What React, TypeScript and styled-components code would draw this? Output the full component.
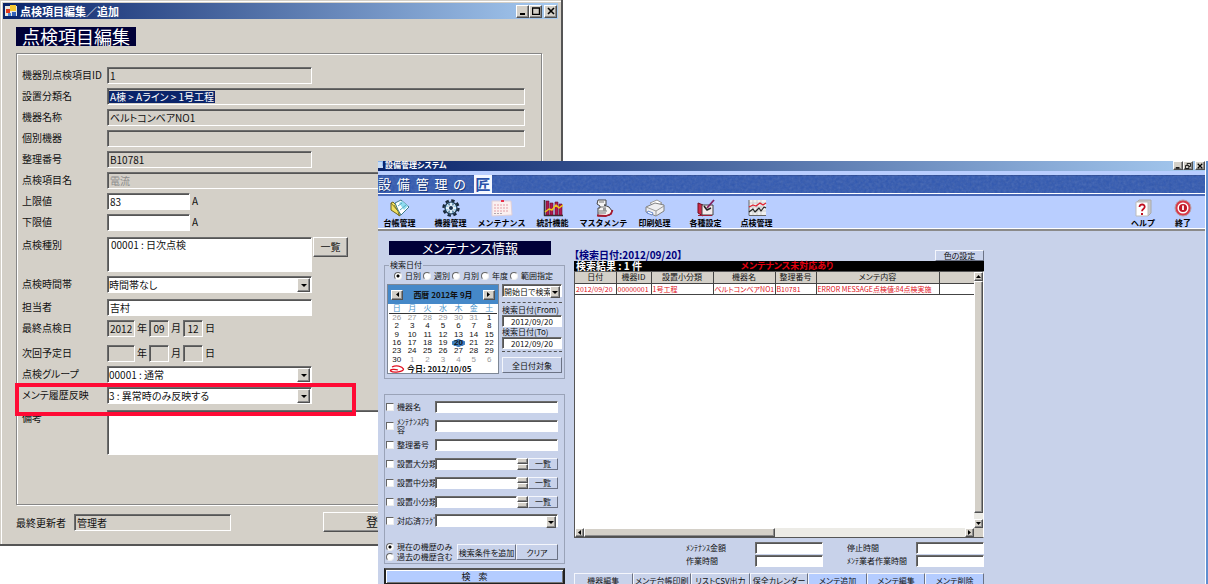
import React from "react";
import styled, { createGlobalStyle, css } from "styled-components";

const Global = createGlobalStyle`
  *, *::before, *::after { box-sizing: border-box; }
  body { margin: 0; background: #fff; }
  body, button, input, select, textarea {
    font-family: "Noto Sans CJK JP", "Liberation Sans", sans-serif;
    font-feature-settings: "palt";
    color: #111;
  }
  button, input, select, textarea { margin: 0; padding: 0; font-size: inherit; border-radius: 0; }
`;

const Desktop = styled.div`
  position: relative;
  height: 100vh;
  overflow: hidden;
  white-space: nowrap;
`;

const sunken = css`
  border: 1px solid;
  border-color: #6c6c6c #fff #fff #6c6c6c;
  box-shadow: inset 1px 1px 0 #555;
`;
const raised = css`
  border: 1px solid;
  border-color: #fff #505050 #505050 #fff;
  box-shadow: inset -1px -1px 0 #8c8c8c;
`;

/* ---------- shared title bar ---------- */
const WinButtons = styled.div<{ $w: number }>`
  display: flex;
  margin-left: auto;
  button {
    ${raised}
    display: grid;
    place-items: center;
    width: ${(p) => p.$w}px;
    height: 100%;
    background: #d4d0c8;
  }
  button:last-child { margin-left: 2px; }
  svg { display: block; }
`;

const MinIcon = () => (
  <svg width="8" height="7" viewBox="0 0 8 7"><path d="M1 6h5" stroke="#000" strokeWidth="2" /></svg>
);
const MaxIcon = () => (
  <svg width="8" height="8" viewBox="0 0 8 8"><path d="M.5 1h7v6.500h-7zM0 1h8" fill="none" stroke="#000" strokeWidth="1.400" /></svg>
);
const RestoreIcon = () => (
  <svg width="7" height="7" viewBox="0 0 7 7"><path d="M2.500 2.500v-2h4v3.500h-2M.5 3h4v3.500h-4z" fill="none" stroke="#000" /></svg>
);
const CloseIcon = () => (
  <svg width="8" height="8" viewBox="0 0 8 8"><path d="M1 1l6 6M7 1l-6 6" stroke="#000" strokeWidth="1.600" /></svg>
);

/* ---------- edit dialog ---------- */
const EditWindow = styled.section`
  position: absolute;
  left: 0;
  top: 0;
  width: fit-content;
  padding: 3px;
  background: #d4d0c8;
  border-right: 2px solid #555;
  border-bottom: 2px solid #555;
  box-shadow: inset 1px 1px 0 #d4d0c8, inset 2px 2px 0 #fff;
  font-size: 10px;
`;
const EditTitle = styled.header`
  display: flex;
  align-items: center;
  gap: 3px;
  height: 16px;
  padding: 1px 1px 1px 2px;
  background: linear-gradient(90deg, #0a246a, #a6caf0);
  color: #fff;
  font-size: 11px;
  font-weight: bold;
  line-height: 14px;
  ${WinButtons} { height: 13px; }
`;
const EditBody = styled.div`
  padding: 8px 16px 9px 13px;
`;
const Heading = styled.h1`
  width: fit-content;
  height: 19px;
  margin: 0;
  padding: 0 6px;
  background: #000038;
  color: #fff;
  font-size: 18px;
  font-weight: normal;
  line-height: 19px;
`;
const Panel = styled.div`
  margin-top: 7px;
  padding: 13px 16px 49px 5px;
  border: 1px solid #868686;
  box-shadow: inset 1px 1px 0 #fff, 1px 1px 0 #fff;
`;
const Row = styled.div<{ $gap?: number }>`
  position: relative;
  display: flex;
  align-items: flex-start;
  margin-top: ${(p) => p.$gap ?? 4}px;
  line-height: 16px;
  &:first-child { margin-top: 0; }
  > label:first-child, > span:first-child { width: 85px; margin: 0; }
`;
const Unit = styled.span`
  margin: 0 2px;
`;
const Field = styled.input<{ $w: number; $center?: boolean }>`
  ${sunken}
  width: ${(p) => p.$w}px;
  height: 17px;
  padding: 0 2px;
  background: #fff;
  line-height: 15px;
  text-align: ${(p) => (p.$center ? "center" : "left")};
  &[readonly], &:disabled { background: #d4d0c8; }
  &:disabled { color: #8c8c8c; }
`;
const Selected = styled.div`
  ${sunken}
  width: 418px;
  height: 17px;
  padding: 2px 1px;
  line-height: 12px;
  span { display: inline-block; padding: 0 1px; background: #0a246a; color: #fff; }
`;
const Area = styled.textarea<{ $w: number; $h: number }>`
  ${sunken}
  display: block;
  width: ${(p) => p.$w}px;
  height: ${(p) => p.$h}px;
  padding: 0 3px;
  background: #fff;
  line-height: 13px;
  resize: none;
`;
const ListButton = styled.button`
  ${raised}
  width: 35px;
  height: 20px;
  margin-left: 1px;
  background: #d4d0c8;
  line-height: 16px;
`;
const Combo = styled.div<{ $w: number; $h: number }>`
  ${sunken}
  display: grid;
  width: ${(p) => p.$w}px;
  height: ${(p) => p.$h}px;
  padding: 1px 1px 0 0;
  background: #fff;
  select {
    grid-area: 1 / 1;
    width: 100%;
    min-width: 0;
    height: 100%;
    padding-left: 1px;
    border: 0;
    background: transparent;
    appearance: none;
    line-height: 12px;
  }
`;
const Arrow = styled.span<{ $w: number }>`
  ${raised}
  grid-area: 1 / 1;
  justify-self: end;
  display: grid;
  place-items: center;
  width: ${(p) => p.$w}px;
  background: #d4d0c8;
  pointer-events: none;
`;
const Callout = styled.span`
  position: absolute;
  left: -7px;
  top: -4px;
  width: 341px;
  height: 33px;
  border: 4px solid #ff0a35;
  z-index: 1;
  pointer-events: none;
`;
const EditFooter = styled.div`
  display: flex;
  align-items: center;
  height: 20px;
  margin-top: 7px;
  label { width: 58px; }
`;
const SubmitButton = styled.button`
  ${raised}
  width: 110px;
  height: 20px;
  margin-left: 92px;
  background: #d4d0c8;
  font-size: 12px;
  line-height: 16px;
`;

type DropProps = { id: string; w: number; h: number; arrow: number; value: string; label?: string };
const Drop = ({ id, w, h, arrow, value, label }: DropProps) => (
  <Combo $w={w} $h={h}>
    <select id={id} aria-label={label}><option>{value}</option></select>
    <Arrow $w={arrow}><svg width="6" height="3" viewBox="0 0 6 3"><path d="M0 0h6L3 3z" /></svg></Arrow>
  </Combo>
);

type DateProps = { name: string; y: string; m: string; d: string; gap: number };
const DateRow = ({ name, y, m, d, gap }: DateProps) => (
  <Row $gap={gap}>
    <span>{name}</span>
    <Field $center $w={28} readOnly defaultValue={y} aria-label={name + "(年)"} /><Unit>年</Unit>
    <Field $center $w={20} readOnly defaultValue={m} aria-label={name + "(月)"} /><Unit>月</Unit>
    <Field $center $w={20} readOnly defaultValue={d} aria-label={name + "(日)"} /><Unit>日</Unit>
  </Row>
);

const EditDialog = () => (
  <EditWindow>
    <EditTitle>
      <svg width="12" height="12" viewBox="0 0 12 12">
        <path d="M0 1h12v10H0z" fill="#e8e8e0" /><path d="M1 4h4v4H1z" fill="#e23a1c" />
        <path d="M5 0h6v6H5z" fill="#f5c832" /><path d="M3 8h3v3H3z" fill="#4a86d8" /><path d="M7 7h4v4H7z" fill="#3462b8" />
      </svg>
      点検項目編集／追加
      <WinButtons $w={13}>
        <button aria-label="最小化"><MinIcon /></button>
        <button aria-label="最大化"><MaxIcon /></button>
        <button aria-label="閉じる"><CloseIcon /></button>
      </WinButtons>
    </EditTitle>
    <EditBody>
      <Heading>点検項目編集</Heading>
      <Panel>
        <Row><label htmlFor="itemId">機器別点検項目ID</label><Field id="itemId" $w={205} readOnly defaultValue="1" /></Row>
        <Row><span>設置分類名</span><Selected><span>A棟 &gt; Aライン &gt; 1号工程</span></Selected></Row>
        <Row><label htmlFor="devName">機器名称</label><Field id="devName" $w={418} readOnly defaultValue="ベルトコンベアNO1" /></Row>
        <Row><label htmlFor="devUnit">個別機器</label><Field id="devUnit" $w={418} readOnly /></Row>
        <Row><label htmlFor="refNo">整理番号</label><Field id="refNo" $w={205} readOnly defaultValue="B10781" /></Row>
        <Row><label htmlFor="itemName">点検項目名</label><Field id="itemName" $w={418} disabled defaultValue="電流" /></Row>
        <Row><label htmlFor="upper">上限値</label><Field id="upper" $w={83} defaultValue="83" /><Unit>A</Unit></Row>
        <Row><label htmlFor="lower">下限値</label><Field id="lower" $w={83} /><Unit>A</Unit></Row>
        <Row $gap={6}>
          <label htmlFor="kind">点検種別</label>
          <Area id="kind" $w={205} $h={35} defaultValue="00001 : 日次点検" />
          <ListButton>一覧</ListButton>
        </Row>
        <Row><label htmlFor="zone">点検時間帯</label><Drop id="zone" w={205} h={17} arrow={13} value="時間帯なし" /></Row>
        <Row $gap={6}><label htmlFor="person">担当者</label><Field id="person" $w={205} defaultValue="吉村" /></Row>
        <DateRow name="最終点検日" y="2012" m="09" d="12" gap={4} />
        <DateRow name="次回予定日" y="" m="" d="" gap={8} />
        <Row><label htmlFor="group">点検グループ</label><Drop id="group" w={205} h={17} arrow={13} value="00001 : 通常" /></Row>
        <Row>
          <label htmlFor="reflect">メンテ履歴反映</label>
          <Drop id="reflect" w={205} h={17} arrow={13} value="3 : 異常時のみ反映する" />
          <Callout />
        </Row>
        <Row $gap={6}><label htmlFor="memo">備考</label><Area id="memo" $w={418} $h={45} /></Row>
      </Panel>
      <EditFooter>
        <label htmlFor="updater">最終更新者</label>
        <Field id="updater" $w={157} readOnly defaultValue="管理者" />
        <SubmitButton>登録</SubmitButton>
      </EditFooter>
    </EditBody>
  </EditWindow>
);

/* ---------- main window ---------- */
const MainWindow = styled.section`
  position: absolute;
  left: 378px;
  top: 161px;
  right: 0;
  bottom: 0;
  overflow: hidden;
  padding-right: 1px;
  background: #c8d2ea;
  border-right: 2px solid #5f8fd0;
  box-shadow: inset -1px 0 0 #fff;
  font-size: 8px;
  line-height: 10px;
`;
const MainTitle = styled.header`
  display: flex;
  gap: 1px;
  height: 10px;
  background: linear-gradient(90deg, #0a246a, #a6caf0);
  color: #fff;
  font-weight: bold;
  line-height: 8px;
  ${WinButtons} { height: 9px; }
  ${WinButtons} svg { width: 6px; height: 6px; }
`;
const Banner = styled.div`
  position: relative;
  display: flex;
  align-items: center;
  gap: 8px;
  height: 23px;
  border-top: 4px solid #b9ceff;
  border-bottom: 1px solid #fff;
  background: #2f57b0;
  box-shadow: inset 0 1px 0 #2a4a98;
  color: #fff;
  font-size: 13px;
  white-space: pre;
  text-shadow: 1px 1px 0 #1c3878;
  b {
    z-index: 1;
    width: 18px;
    height: 18px;
    background: #f4f7ff;
    color: #2850a8;
    font-size: 15px;
    line-height: 17px;
    text-align: center;
    text-shadow: none;
  }
  span { z-index: 1; }
  svg { position: absolute; inset: 0; width: 100%; height: 100%; opacity: 0.2; }
`;
const Toolbar = styled.nav`
  display: flex;
  justify-content: space-between;
  height: 37px;
  padding-top: 3px;
  padding-right: 2px;
  background: #b9ceff;
  border-top: 2px solid #4a6ab8;
  border-bottom: 2px solid #8a8a8a;
  box-shadow: 0 -1px 0 #fff inset;
`;
const ToolGroup = styled.div<{ $col: number; $shift: number }>`
  display: grid;
  grid-auto-flow: column;
  grid-auto-columns: ${(p) => p.$col}px;
  margin-left: ${(p) => p.$shift}px;
`;
const Tool = styled.button`
  display: flex;
  flex-direction: column;
  align-items: center;
  gap: 1px;
  border: 0;
  background: none;
  color: #000;
  font-size: 8px;
  font-weight: bold;
  line-height: 10px;
  font-feature-settings: normal;
`;
const MainBody = styled.div`
  display: flex;
  gap: 9px;
  padding: 10px 0 0 6px;
`;
const Side = styled.aside`
  width: 181px;
`;
const SideHeading = styled.h2`
  height: 14px;
  margin: 0 14px 0 5px;
  background: #000038;
  color: #fff;
  font-size: 13px;
  font-weight: normal;
  line-height: 14px;
  text-align: center;
`;
const Box = styled.fieldset`
  min-width: 0;
  margin: 6px 0 0;
  padding: 2px 2px 4px;
  border: 1px solid #9aa3b8;
  legend { margin-left: 2px; padding: 0 1px; line-height: 8px; }
`;
const RadioLine = styled.div`
  display: flex;
  gap: 2px;
  height: 9px;
  padding-left: 7px;
  line-height: 9px;
`;
const Check = styled.label`
  display: flex;
  flex: none;
  align-items: center;
  gap: 3px;
  input {
    flex: none;
    width: 8px;
    height: 8px;
    appearance: none;
    background: #fff;
    border: 1px solid;
    border-color: #666 #eee #eee #666;
  }
  input[type="radio"] { border-radius: 50%; }
  input[type="radio"]:checked { background: radial-gradient(#000 0 1px, #fff 2px); }
`;
const DateArea = styled.div`
  display: flex;
  gap: 3px;
  margin-top: 4px;
`;
const Calendar = styled.div`
  width: 112px;
  height: 90px;
  border: 1px solid #7d8796;
  background: #fff;
`;
const CalHead = styled.div`
  display: flex;
  align-items: center;
  justify-content: space-between;
  height: 19px;
  padding: 0 3px;
  background: #4588c8;
  font-weight: bold;
  button { ${raised} display: grid; place-items: center; width: 12px; height: 10px; background: #d4d0c8; }
`;
const CalTable = styled.table`
  width: 108px;
  height: 60px;
  margin: 0 1px;
  border-collapse: collapse;
  text-align: center;
  line-height: 8px;
  th { height: 9px; padding: 0; border-bottom: 1px solid #333; color: #4a94cc; font-weight: normal; }
  td { padding: 0; font-family: "Liberation Sans", sans-serif; }
`;
const Day = styled.td<{ $out: boolean; $on: boolean }>`
  color: ${(p) => (p.$out ? "#999" : "#111")};
  ${(p) => p.$on && css`background: radial-gradient(ellipse at center, #3f7fc0 62%, transparent 66%); font-weight: bold;`}
`;
const Today = styled.div`
  display: flex;
  align-items: center;
  gap: 2px;
  padding-left: 1px;
  font-weight: bold;
  line-height: 9px;
`;
const Dash = styled.hr<{ $top: number; $bottom: number }>`
  width: 100%;
  margin: ${(p) => p.$top}px 0 ${(p) => p.$bottom}px;
  border: 0;
  border-top: 1px dashed #555;
`;
const Small = styled.input<{ $center?: boolean }>`
  ${sunken}
  flex: 1;
  width: 100%;
  min-width: 0;
  height: 12px;
  padding: 0 2px;
  background: #fff;
  line-height: 9px;
  text-align: ${(p) => (p.$center ? "center" : "left")};
`;
const DateSide = styled.div`
  flex: 1;
  min-width: 0;
  display: flex;
  flex-direction: column;
  label { line-height: 10px; }
  ${Small} { flex: none; }
`;
const FlatButton = styled.button<{ $h: number; $grow?: boolean; $w?: number; $blue?: boolean }>`
  border: 1px solid;
  border-color: #f4f6fc #6b7284 #6b7284 #f4f6fc;
  flex: ${(p) => (p.$grow ? "1" : "none")};
  ${(p) => p.$w && css`width: ${p.$w}px;`}
  height: ${(p) => p.$h}px;
  background: ${(p) => (p.$blue ? "#b4ccff" : "#c8d2ea")};
  line-height: 9px;
`;
const Criteria = styled(Box)`
  margin-top: 15px;
  padding: 5px 6px 1px 1px;
`;
const CritRow = styled.div`
  display: flex;
  align-items: center;
  height: 13px;
  margin-bottom: 6px;
  ${Check} { width: 49px; line-height: 8px; }
`;
const Spinner = styled.span`
  display: flex;
  flex: none;
  flex-direction: column;
  width: 11px;
  i { ${raised} height: 6px; background: #d4d0c8; }
`;
const CritFoot = styled.div`
  display: flex;
  align-items: center;
  justify-content: space-between;
  margin-top: 15px;
  ${Check} { line-height: 10px; }
`;
const ButtonPair = styled.div`
  display: flex;
`;
const SearchButton = styled.button`
  width: 100%;
  height: 17px;
  margin-top: 4px;
  border: 2px solid #222;
  border-top-color: #555;
  background: #b4ccff;
  box-shadow: inset 1px 1px 0 #fff, inset -1px -1px 0 #777;
  font-size: 9px;
  line-height: 12px;
  white-space: pre;
`;
const Results = styled.main`
  width: 410px;
`;
const ResultHead = styled.div`
  display: flex;
  align-items: flex-end;
  justify-content: space-between;
  height: 20px;
  b { color: #00007c; font-size: 10px; line-height: 13px; }
`;
const BlackBar = styled.div`
  display: grid;
  grid-template-columns: 1fr auto 1fr;
  height: 10px;
  padding: 0 2px;
  background: #000;
  color: #fff;
  font-size: 10px;
  font-weight: bold;
  line-height: 10px;
  em { color: #e00010; font-size: 9px; font-style: normal; padding-left: 16px; }
`;
const GridBox = styled.div`
  border: 1px solid #555;
  border-right-color: #fff;
  background: #fff;
`;
const GridTop = styled.div`
  display: flex;
  height: 256px;
`;
const TableArea = styled.div`
  flex: 1;
  min-width: 0;
`;
const DataTable = styled.table`
  width: 100%;
  border-collapse: collapse;
  table-layout: fixed;
  line-height: 10px;
  th, td { height: 11px; padding: 0 1px; border: 1px solid #444; border-left: 0; overflow: hidden; }
  th { border-top: 0; background: #d4d0c8; font-weight: normal; }
  td { color: #e01020; font-size: 7px; }
  th:last-child, td:last-child { border-right: 0; }
`;
const Bar = styled.div<{ $vertical?: boolean }>`
  display: flex;
  flex-direction: ${(p) => (p.$vertical ? "column" : "row")};
  ${(p) => (p.$vertical ? "width: 9px;" : "height: 9px; margin-right: 9px;")}
  background: #ecebe6;
  button { ${raised} flex: none; display: grid; place-items: center; width: 9px; height: 9px; background: #d4d0c8; }
`;
const Thumb = styled.span<{ $len: string }>`
  ${raised}
  background: #d4d0c8;
  flex: 0 0 ${(p) => p.$len};
`;
const BarRow = styled.div`
  background: #d4d0c8;
`;
const Space = styled.span`
  flex: 1;
`;
const Totals = styled.div`
  display: grid;
  grid-template-columns: 69px 68px 24px 69px 68px;
  justify-content: end;
  row-gap: 1px;
  margin-top: 4px;
  label { line-height: 12px; }
`;
const Actions = styled.div`
  display: flex;
  margin-top: 6px;
`;

/* toolbar pictures */
const Pic = ({ children }: { children: React.ReactNode }) => (
  <svg width="20" height="18" viewBox="0 0 20 18" fill="none" strokeLinejoin="round">{children}</svg>
);
const LedgerPic = () => (
  <Pic>
    <path d="M1 4l2-1 7 7v7L1 11z" fill="#f2e060" stroke="#6b6420" />
    <path d="M4 6l4 6 1 5M1 4l7 8" stroke="#6b6420" strokeWidth=".8" />
    <path d="M5 4l6-3 8 7-8 8-3-5z" fill="#fff" stroke="#3e7a88" />
    <path d="M9 4l3-2 6 5-4 4z" fill="#8edcf0" /><path d="M10 11l6-5M8 7l4-3" stroke="#58a8c0" />
  </Pic>
);
const GearPic = () => (
  <Pic>
    <circle cx="10" cy="9" r="7.500" stroke="#182838" strokeWidth="2.400" strokeDasharray="3.400 2.490" />
    <circle cx="10" cy="9" r="6" fill="#9cccea" stroke="#20384c" strokeWidth="1.200" />
    <path d="M10 4v10M5 9h10M6.500 5.500l7 7M13.500 5.500l-7 7" stroke="#fff" strokeWidth="1.300" />
    <path d="M8 4.500v2M12 4.500v2M8 11.500v2M12 11.500v2" stroke="#2c4c68" />
    <circle cx="10" cy="9" r="2" fill="#18304a" />
  </Pic>
);
const NotePic = () => (
  <svg width="22" height="18" viewBox="0 0 22 18" fill="none">
    <path d="M1 2h19l1 14-20 1z" fill="#fbf0f0" stroke="#e0d0d8" />
    <path d="M10 1h3v2h-3z" fill="#e83048" />
    <path d="M3 6h15M3 9h15M3 12h14" stroke="#e0a0a8" strokeDasharray="2 1" /><path d="M3 14.500h8" stroke="#b0a8b0" strokeDasharray="2 1" />
  </svg>
);
const StatsPic = () => (
  <Pic>
    <path d="M1.500 1v15.500H20" stroke="#333" strokeWidth="1.500" />
    <path d="M3 2h3v14H3zM7 4h3v12H7zM12 3h3v13h-3zM16 5h3v11h-3z" fill="#b01850" stroke="#601028" strokeWidth=".6" />
    <path d="M2 13l4-3 3 1 4-5 3 3 4-3" stroke="#f0c818" strokeWidth="1.500" />
  </Pic>
);
const MasterPic = () => (
  <Pic>
    <path d="M4 1h8v5h-2l5 2 3 4-2 4-5 1H4V9h2V7L3 5z" fill="#f4f4f4" stroke="#444" />
    <path d="M5 3h5M6 8h6M5 12h8M4 14h8" stroke="#777" /><path d="M3 16.500l9 .5 5-2 1.500-4" stroke="#a81830" strokeWidth="1.800" /><path d="M9 9h3v3H9z" fill="#999" />
  </Pic>
);
const PrinterPic = () => (
  <Pic>
    <path d="M5 4l7-3 5 3-7 4z" fill="#fff" stroke="#999" />
    <path d="M1 8l9-4 9 2v6l-8 5-10-4z" fill="#eeeef0" stroke="#808080" />
    <path d="M1 8l10 4 8-5M11 12v5" stroke="#999" /><path d="M3 12l5 2-1 2-5-2z" fill="#fff" stroke="#4870c0" strokeWidth=".8" />
  </Pic>
);
const SettingPic = () => (
  <Pic>
    <path d="M2 4l5 2v11l-5-3z" fill="#d02848" stroke="#701020" />
    <path d="M6 6h11v10H6z" fill="#f4ecec" stroke="#444" /><path d="M2 16.500h14" stroke="#a02038" />
    <path d="M18 1l-7 8" stroke="#802060" strokeWidth="1.800" /><path d="M8 7l3 4 4-2" stroke="#222" strokeWidth="1.600" />
  </Pic>
);
const GraphPic = () => (
  <Pic>
    <path d="M2 1h17v15H2z" fill="#efefef" /><path d="M2 4h17M2 8h17M2 12h17M6 1v15M10 1v15M14 1v15" stroke="#c4c4c4" strokeWidth=".7" />
    <path d="M2 1v15.500h17" stroke="#666" /><path d="M2 8l4-2 3 1 4-3 3 2 3-2" stroke="#e02030" strokeWidth="1.300" />
    <path d="M2 13l4-3 2 3 4-4 2 3 3-4 2 1" stroke="#222" strokeWidth="1.200" />
  </Pic>
);
const HelpPic = () => (
  <Pic>
    <path d="M3 4l3-3h12v13l-3 3" fill="#c8c8c8" stroke="#aaa" /><path d="M3 3h12v14H3z" fill="#fff" stroke="#bbb" />
    <path d="M6.500 8c0-3.500 5.500-3.200 5.200 0C11.500 10 9 10 9 12.200" stroke="#c01020" strokeWidth="1.800" /><path d="M8 14h2v2H8z" fill="#c01020" />
  </Pic>
);
const ExitPic = () => (
  <Pic>
    <circle cx="10" cy="9" r="8" fill="#d83848" stroke="#b8a0a8" /><circle cx="10" cy="9" r="4.800" fill="#c01828" stroke="#fff" strokeWidth="1.500" />
    <path d="M10 6.500v4.500" stroke="#fff" strokeWidth="1.800" />
  </Pic>
);

const tools: [string, () => React.ReactElement][] = [
  ["台帳管理", LedgerPic], ["機器管理", GearPic], ["メンテナンス", NotePic], ["統計機能", StatsPic],
  ["マスタメンテ", MasterPic], ["印刷処理", PrinterPic], ["各種設定", SettingPic], ["点検管理", GraphPic],
];
const endTools: [string, () => React.ReactElement][] = [["ヘルプ", HelpPic], ["終了", ExitPic]];

const days = [26, 27, 28, 29, 30, 31, ...Array.from({ length: 30 }, (_, i) => i + 1), 1, 2, 3, 4, 5, 6];
const weeks = Array.from({ length: 6 }, (_, w) => days.slice(w * 7, w * 7 + 7));
const isOut = (w: number, d: number) => (w === 0 && d > 20) || (w === 5 && d < 20);

const criteria: { name: string; kind: "text" | "list" | "select" }[] = [
  { name: "機器名", kind: "text" }, { name: "ﾒﾝﾃﾅﾝｽ内\n容", kind: "text" }, { name: "整理番号", kind: "text" },
  { name: "設置大分類", kind: "list" }, { name: "設置中分類", kind: "list" }, { name: "設置小分類", kind: "list" },
  { name: "対応済ﾌﾗｸﾞ", kind: "select" },
];
const CritText = styled.span`
  white-space: pre;
`;

const columns: [string, number | undefined][] = [
  ["日付", 41], ["機器ID", 35], ["設置小分類", 62], ["機器名", 62], ["整理番号", 41], ["メンテ内容", 123], ["", undefined],
];
const record = ["2012/09/20", "00000001", "1号工程", "ベルトコンベアNO1", "B10781", "ERROR MESSAGE点検値:84点検実施", ""];
const actions = ["機器編集", "メンテ台帳印刷", "リストCSV出力", "保全カレンダー", "メンテ追加", "メンテ編集", "メンテ削除"];

const Tri = ({ d }: { d: string }) => <svg width="5" height="5" viewBox="0 0 5 5"><path d={d} /></svg>;
const LEFT = "M4 0v5L1 2.500z";
const RIGHT = "M1 0v5l3-2.500z";
const UP = "M0 4h5L2.500 1z";
const DOWN = "M0 1h5L2.500 4z";

const SearchPanel = () => (
  <Side>
    <SideHeading>メンテナンス情報</SideHeading>
    <Box>
      <legend>検索日付</legend>
      <RadioLine>
        {["日別", "週別", "月別", "年度", "範囲指定"].map((t, i) => (
          <Check key={t}><input type="radio" name="range" defaultChecked={i === 0} />{t}</Check>
        ))}
      </RadioLine>
      <DateArea>
        <Calendar>
          <CalHead>
            <button aria-label="前の月"><Tri d={LEFT} /></button>
            西暦 2012年 9月
            <button aria-label="次の月"><Tri d={RIGHT} /></button>
          </CalHead>
          <CalTable>
            <thead><tr>{[..."日月火水木金土"].map((d) => <th key={d}>{d}</th>)}</tr></thead>
            <tbody>
              {weeks.map((week, w) => (
                <tr key={w}>{week.map((d) => <Day key={d} $out={isOut(w, d)} $on={w > 0 && d === 20}>{d}</Day>)}</tr>
              ))}
            </tbody>
          </CalTable>
          <Today>
            <svg width="16" height="8" viewBox="0 0 16 8"><path d="M3 2C7 0 13 1 14.500 4c0 3-10 4-13 2C1 4 6 4 9 5" fill="none" stroke="#e01020" strokeWidth="1.300" /></svg>
            今日: 2012/10/05
          </Today>
        </Calendar>
        <DateSide>
          <Drop id="basis" label="検索基準" w={60} h={13} arrow={10} value="開始日で検索" />
          <Dash $top={5} $bottom={2} />
          <label htmlFor="from">検索日付(From)</label>
          <Small id="from" $center defaultValue="2012/09/20" />
          <label htmlFor="to">検索日付(To)</label>
          <Small id="to" $center defaultValue="2012/09/20" />
          <Dash $top={2} $bottom={5} />
          <FlatButton $h={16}>全日付対象</FlatButton>
        </DateSide>
      </DateArea>
    </Box>
    <Criteria>
      {criteria.map(({ name, kind }, i) => (
        <CritRow key={name}>
          <Check><input type="checkbox" /><CritText>{name}</CritText></Check>
          {kind === "select" ? <Drop id={"crit" + i} label={name} w={123} h={13} arrow={10} value="" /> : <Small aria-label={name} />}
          {kind === "list" && <><Spinner><i /><i /></Spinner><FlatButton $h={12} $w={30}>一覧</FlatButton></>}
        </CritRow>
      ))}
      <CritFoot>
        <div>
          <Check><input type="radio" name="history" defaultChecked />現在の機歴のみ</Check>
          <Check><input type="radio" name="history" />過去の機歴含む</Check>
        </div>
        <ButtonPair>
          <FlatButton $h={16} $w={59}>検索条件を追加</FlatButton>
          <FlatButton $h={16} $w={42}>クリア</FlatButton>
        </ButtonPair>
      </CritFoot>
    </Criteria>
    <SearchButton>検    索</SearchButton>
  </Side>
);

const ResultPanel = () => (
  <Results>
    <ResultHead><b>【検索日付:2012/09/20】</b><FlatButton $h={11} $w={49}>色の設定</FlatButton></ResultHead>
    <BlackBar><span>検索結果 : 1 件</span><em>メンテナンス未対応あり</em></BlackBar>
    <GridBox>
      <GridTop>
        <TableArea>
          <DataTable>
            <colgroup>{columns.map(([n, w]) => <col key={n} width={w} />)}</colgroup>
            <thead><tr>{columns.map(([n]) => <th key={n}>{n}</th>)}</tr></thead>
            <tbody><tr>{record.map((v, i) => <td key={i}>{v}</td>)}</tr></tbody>
          </DataTable>
        </TableArea>
        <Bar $vertical>
          <button aria-label="上へ"><Tri d={UP} /></button>
          <Thumb $len="232px" />
          <Space />
          <button aria-label="下へ"><Tri d={DOWN} /></button>
        </Bar>
      </GridTop>
      <BarRow>
        <Bar>
          <button aria-label="左へ"><Tri d={LEFT} /></button>
          <Thumb $len="191px" />
          <Space />
          <button aria-label="右へ"><Tri d={RIGHT} /></button>
        </Bar>
      </BarRow>
    </GridBox>
    <Totals>
      <label htmlFor="cost">ﾒﾝﾃﾅﾝｽ金額</label><Small id="cost" /><span />
      <label htmlFor="stop">停止時間</label><Small id="stop" />
      <label htmlFor="work">作業時間</label><Small id="work" /><span />
      <label htmlFor="vendor">ﾒﾝﾃ業者作業時間</label><Small id="vendor" />
    </Totals>
    <Actions>
      {actions.map((a, i) => <FlatButton key={a} $h={14} $grow $blue={i > 3}>{a}</FlatButton>)}
    </Actions>
  </Results>
);

const Main = () => (
  <MainWindow>
    <MainTitle>
      <svg width="6" height="8" viewBox="0 0 6 8"><path d="M0 0h5v7H0z" fill="#8cb8f0" /><path d="M0 2h4M0 4h4M0 6h5" stroke="#fff" /></svg>
      設備管理システム
      <WinButtons $w={10}>
        <button aria-label="最小化"><MinIcon /></button>
        <button aria-label="元に戻す"><RestoreIcon /></button>
        <button aria-label="閉じる"><CloseIcon /></button>
      </WinButtons>
    </MainTitle>
    <Banner>
      <svg>
        <filter id="grain"><feTurbulence type="fractalNoise" baseFrequency="0.35" numOctaves="2" /><feColorMatrix type="saturate" values="0" /></filter>
        <rect width="100%" height="100%" filter="url(#grain)" />
      </svg>
      <span>設  備  管  理  の</span><b>匠</b>
    </Banner>
    <Toolbar>
      <ToolGroup $col={51} $shift={-4}>
        {tools.map(([t, I]) => <Tool key={t}><I />{t}</Tool>)}
      </ToolGroup>
      <ToolGroup $col={40} $shift={0}>
        {endTools.map(([t, I]) => <Tool key={t}><I />{t}</Tool>)}
      </ToolGroup>
    </Toolbar>
    <MainBody>
      <SearchPanel />
      <ResultPanel />
    </MainBody>
  </MainWindow>
);

export default function App() {
  return (
    <>
      <Global />
      <Desktop>
        <EditDialog />
        <Main />
      </Desktop>
    </>
  );
}
